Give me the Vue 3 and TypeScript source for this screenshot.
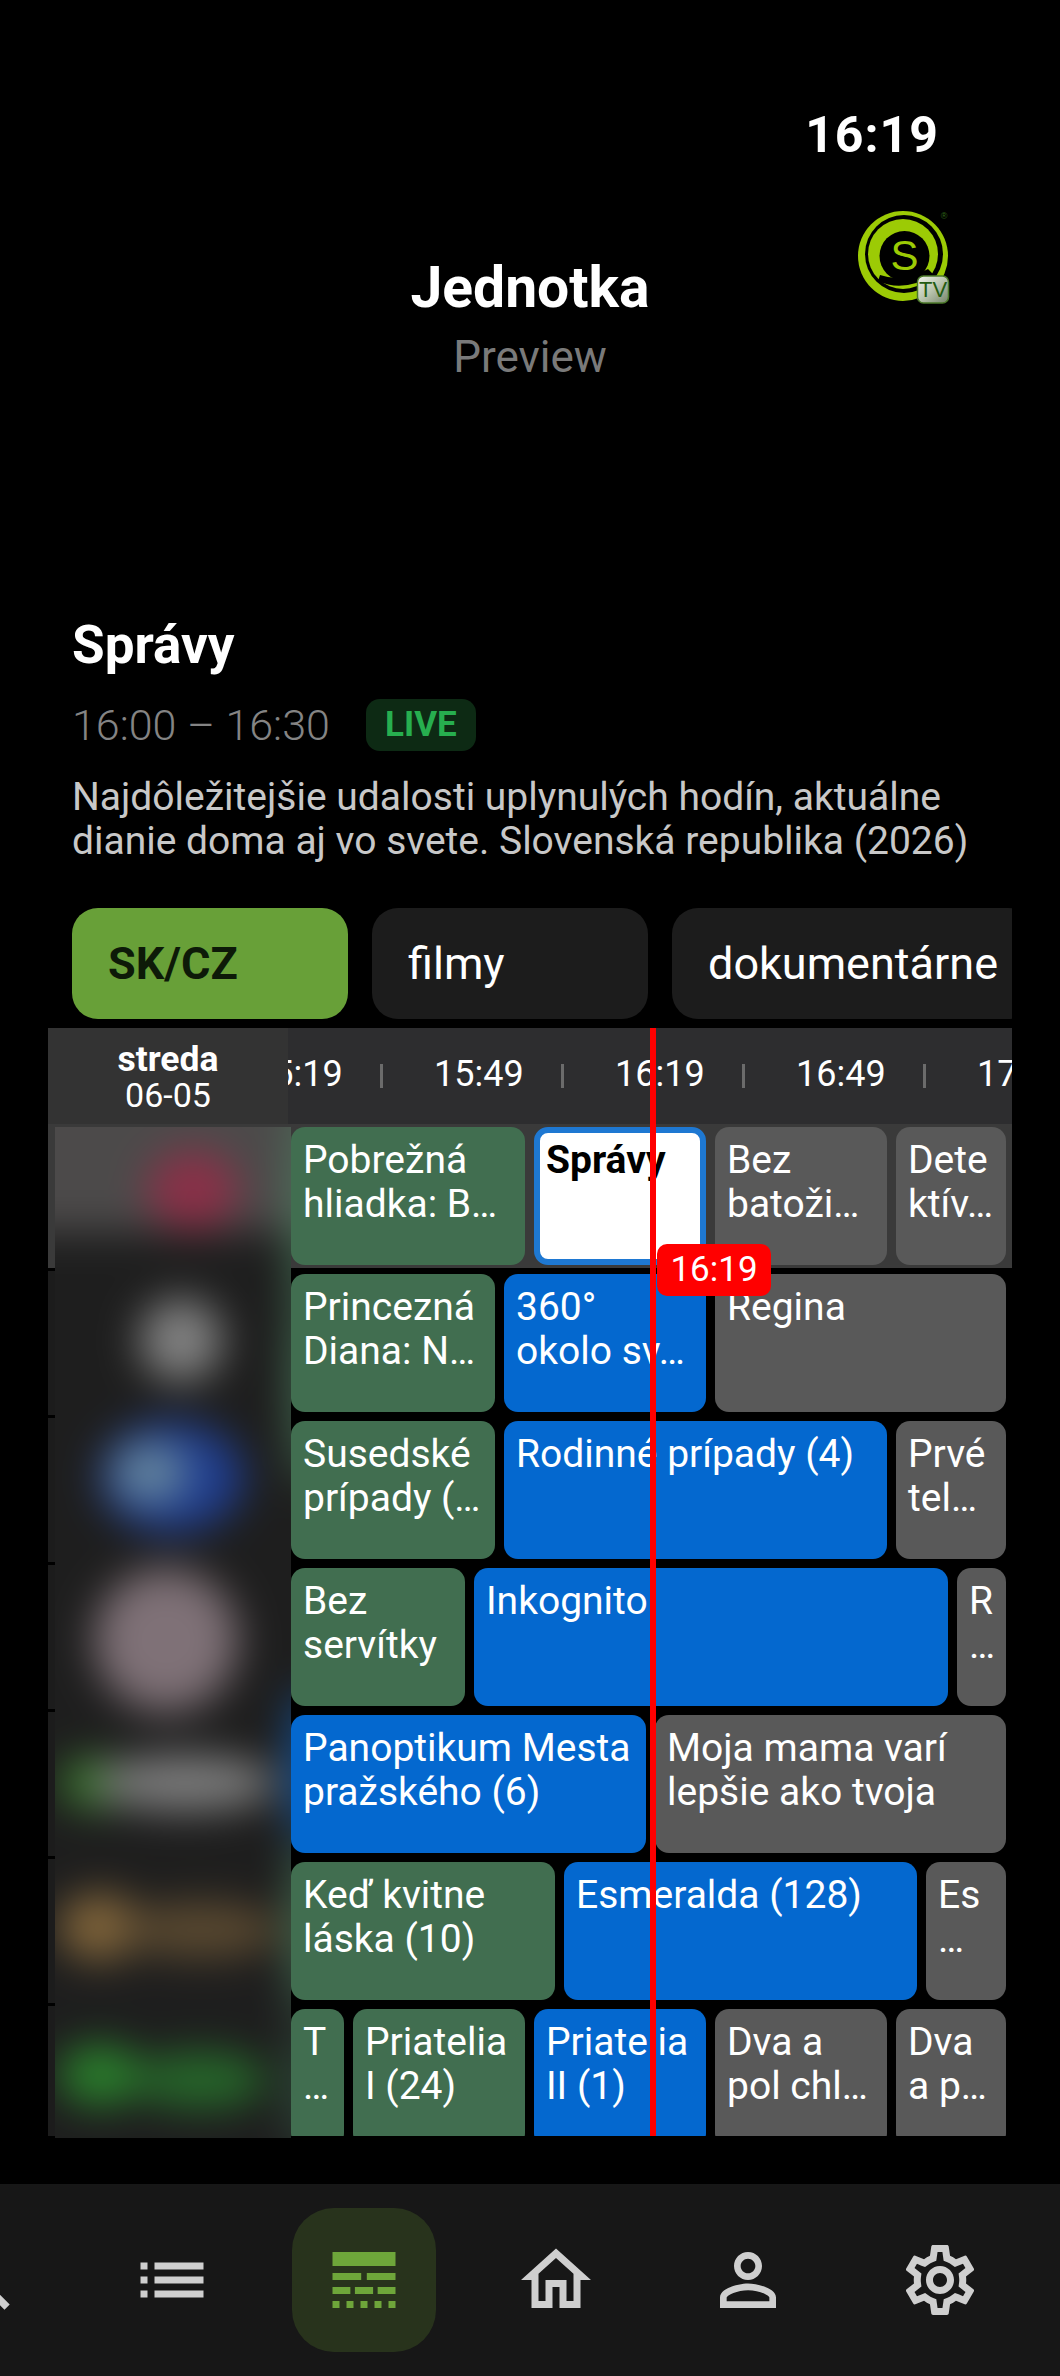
<template>
  <div class="app">
    <section class="top">
      <div class="clock">16:19</div>
      <h1 class="channel">Jednotka</h1>
      <div class="preview">Preview</div>
      <svg class="logo" viewBox="0 0 94 98" width="94" height="98">
        <circle cx="45" cy="47" r="45" fill="#9ccb05" />
        <circle cx="46" cy="45" r="39" fill="#000" />
        <circle cx="45" cy="45" r="35" fill="#9ccb05" />
        <path d="M20 72 Q45 84 76 66 L70 60 Q45 74 22 66 Z" fill="#000" />
        <circle cx="46.500" cy="47" r="25" fill="#000" />
        <text x="46.500" y="61" text-anchor="middle" class="logo-s">S</text>
        <text x="86" y="10" text-anchor="middle" class="logo-r">®</text>
        <rect x="59.500" y="67" width="31" height="27" rx="6" fill="url(#badge)" stroke="#4c7a2a" stroke-width="1.500" />
        <text x="75" y="88" text-anchor="middle" class="logo-tv">TV</text>
        <defs>
          <linearGradient id="badge" x1="0" y1="0" x2="1" y2="1">
            <stop offset="0" stop-color="#f2f5ee" />
            <stop offset="0.5" stop-color="#b9c4ae" />
            <stop offset="1" stop-color="#75846a" />
          </linearGradient>
        </defs>
      </svg>
    </section>

    <section class="info">
      <h2 class="show-title">Správy</h2>
      <div class="show-time">
        <span>16:00 – 16:30</span>
        <span class="live">LIVE</span>
      </div>
      <p class="show-desc">
        Najdôležitejšie udalosti uplynulých hodín, aktuálne<br />
        dianie doma aj vo svete. Slovenská republika (2026)
      </p>
    </section>

    <div class="chips">
      <div v-for="(c, i) in chips" :key="c" class="chip" :class="{ active: i === 0 }">{{ c }}</div>
    </div>

    <section class="guide">
      <div class="guide-head">
        <div class="date">
          <strong>streda</strong>
          <span>06-05</span>
        </div>
        <div class="track">
          <div v-for="t in times" :key="t" class="cell">
            <i class="tick"></i>
            <span>{{ t }}</span>
          </div>
        </div>
      </div>

      <div class="guide-body">
        <div v-for="(row, r) in rows" :key="r" class="row" :class="{ current: r === 0 }">
          <div class="strip"></div>
          <div class="tiles">
            <div
              v-for="(t, i) in row"
              :key="i"
              class="tile"
              :class="t.kind"
              :style="{ width: t.w + 'px' }"
            >
              <span v-for="l in t.lines" :key="l">{{ l }}</span>
            </div>
          </div>
        </div>
      </div>

      <svg class="channels" viewBox="0 0 236 1011" width="236" height="1011">
        <defs>
          <filter id="soft" x="-20%" y="-20%" width="140%" height="140%" color-interpolation-filters="sRGB">
            <feGaussianBlur stdDeviation="20" />
          </filter>
        </defs>
        <g filter="url(#soft)">
          <rect x="-80" y="-80" width="400" height="1180" fill="#1e1e1e" />
          <rect x="-80" y="-80" width="400" height="185" fill="#4c4a4a" />
          <ellipse
            v-for="(b, i) in blobs"
            :key="i"
            :cx="b[0]"
            :cy="b[1]"
            :rx="b[2]"
            :ry="b[3]"
            :fill="b[4]"
          />
        </g>
      </svg>

      <div class="now-line"></div>
      <div class="now-badge">16:19</div>
    </section>

    <nav class="nav">
      <div class="nav-item">
        <svg viewBox="0 0 24 24"><path d="M15.5 14h-.79l-.28-.27C15.41 12.59 16 11.11 16 9.5 16 5.91 13.09 3 9.5 3S3 5.91 3 9.500 5.910 16 9.500 16c1.610 0 3.090-.59 4.230-1.570l.27.28v.79l5 4.990L20.490 19l-4.990-5zm-6 0C7.010 14 5 11.990 5 9.500S7.010 5 9.500 5 14 7.010 14 9.500 11.990 14 9.500 14z" /></svg>
      </div>
      <div class="nav-item">
        <svg viewBox="0 0 24 24"><path d="M3 13h2v-2H3v2zm0 4h2v-2H3v2zm0-8h2V7H3v2zm4 4h14v-2H7v2zm0 4h14v-2H7v2zM7 7v2h14V7H7z" /></svg>
      </div>
      <div class="nav-item">
        <div class="nav-active">
          <svg viewBox="0 0 24 24" class="epg">
            <rect x="3" y="4" width="18" height="4" />
            <rect x="3" y="10" width="8.200" height="2" />
            <rect x="12.800" y="10" width="8.200" height="2" />
            <rect x="3" y="14" width="5.100" height="2" />
            <rect x="9.400" y="14" width="5.200" height="2" />
            <rect x="15.900" y="14" width="5.100" height="2" />
            <rect x="3" y="18" width="2" height="2" />
            <rect x="7" y="18" width="2" height="2" />
            <rect x="11" y="18" width="2" height="2" />
            <rect x="15" y="18" width="2" height="2" />
            <rect x="19" y="18" width="2" height="2" />
          </svg>
        </div>
      </div>
      <div class="nav-item">
        <svg viewBox="0 0 24 24"><path d="M12 5.690l5 4.500V18h-2v-6H9v6H7v-7.810l5-4.500M12 3L2 12h3v8h6v-6h2v6h6v-8h3L12 3z" /></svg>
      </div>
      <div class="nav-item">
        <svg viewBox="0 0 24 24"><path d="M12 5.900c1.160 0 2.100.94 2.100 2.100s-.94 2.100-2.100 2.100S9.900 9.160 9.900 8s.94-2.100 2.100-2.100m0 9c2.970 0 6.100 1.460 6.100 2.100v1.100H5.900V17c0-.64 3.130-2.100 6.100-2.100M12 4C9.790 4 8 5.790 8 8s1.790 4 4 4 4-1.790 4-4-1.790-4-4-4zm0 9c-2.670 0-8 1.340-8 4v3h16v-3c0-2.660-5.330-4-8-4z" /></svg>
      </div>
      <div class="nav-item">
        <svg viewBox="0 0 24 24"><path d="M19.430 12.980c.04-.32.07-.64.07-.98 0-.34-.03-.66-.07-.98l2.110-1.650c.19-.15.24-.42.12-.64l-2-3.460c-.09-.16-.26-.25-.44-.25-.06 0-.12.01-.17.03l-2.490 1c-.52-.4-1.080-.73-1.690-.98l-.38-2.650C14.460 2.180 14.250 2 14 2h-4c-.25 0-.46.18-.49.42l-.38 2.650c-.61.25-1.170.59-1.690.98l-2.490-1c-.06-.02-.12-.03-.18-.03-.17 0-.34.09-.43.25l-2 3.460c-.13.22-.07.49.12.64l2.110 1.650c-.04.32-.07.65-.07.98 0 .33.03.66.07.98l-2.110 1.650c-.19.15-.24.42-.12.64l2 3.460c.09.16.26.25.44.25.06 0 .12-.01.17-.03l2.490-1c.52.4 1.080.73 1.690.98l.38 2.650c.03.24.24.42.49.42h4c.25 0 .46-.18.49-.42l.38-2.650c.61-.25 1.170-.59 1.690-.98l2.490 1c.06.02.12.03.18.03.17 0 .34-.09.43-.25l2-3.460c.12-.22.07-.49-.12-.64l-2.110-1.650zm-1.980-1.710c.04.31.05.52.05.73 0 .21-.02.43-.05.73l-.14 1.130.89.7 1.080.84-.7 1.210-1.270-.51-1.040-.42-.9.68c-.43.32-.84.56-1.250.73l-1.060.43-.16 1.130-.2 1.350h-1.400l-.19-1.350-.16-1.130-1.060-.43c-.43-.18-.83-.41-1.230-.71l-.91-.7-1.060.43-1.270.51-.7-1.210 1.080-.84.89-.7-.14-1.130c-.03-.31-.05-.54-.05-.74s.02-.43.05-.73l.14-1.130-.89-.7-1.080-.84.7-1.210 1.270.51 1.040.42.9-.68c.43-.32.84-.56 1.250-.73l1.060-.43.16-1.130.2-1.350h1.390l.19 1.350.16 1.130 1.060.43c.43.18.83.41 1.230.71l.91.7 1.060-.43 1.270-.51.7 1.210-1.070.85-.89.7.14 1.130zM12 8c-2.210 0-4 1.790-4 4s1.790 4 4 4 4-1.790 4-4-1.790-4-4-4zm0 6c-1.100 0-2-.9-2-2s.9-2 2-2 2 .9 2 2-.9 2-2 2z" /></svg>
      </div>
    </nav>
  </div>
</template>

<script setup lang="ts">
type Kind = 'past' | 'now' | 'next' | 'selected'

interface Tile {
  w: number
  kind: Kind
  lines: string[]
}

const chips = ['SK/CZ', 'filmy', 'dokumentárne']
const times = ['15:19', '15:49', '16:19', '16:49', '17:19']

const rows: Tile[][] = [
  [
    { w: 234, kind: 'past', lines: ['Pobrežná', 'hliadka: B…'] },
    { w: 172, kind: 'selected', lines: ['Správy'] },
    { w: 172, kind: 'next', lines: ['Bez', 'batoži…'] },
    { w: 110, kind: 'next', lines: ['Dete', 'ktív…'] },
  ],
  [
    { w: 204, kind: 'past', lines: ['Princezná', 'Diana: N…'] },
    { w: 202, kind: 'now', lines: ['360°', 'okolo sv…'] },
    { w: 291, kind: 'next', lines: ['Regina'] },
  ],
  [
    { w: 204, kind: 'past', lines: ['Susedské', 'prípady (…'] },
    { w: 383, kind: 'now', lines: ['Rodinné prípady (4)'] },
    { w: 110, kind: 'next', lines: ['Prvé', 'tel…'] },
  ],
  [
    { w: 174, kind: 'past', lines: ['Bez', 'servítky'] },
    { w: 474, kind: 'now', lines: ['Inkognito'] },
    { w: 49, kind: 'next', lines: ['R', '…'] },
  ],
  [
    { w: 355, kind: 'now', lines: ['Panoptikum Mesta', 'pražského (6)'] },
    { w: 351, kind: 'next', lines: ['Moja mama varí', 'lepšie ako tvoja'] },
  ],
  [
    { w: 264, kind: 'past', lines: ['Keď kvitne', 'láska (10)'] },
    { w: 353, kind: 'now', lines: ['Esmeralda (128)'] },
    { w: 80, kind: 'next', lines: ['Es', '…'] },
  ],
  [
    { w: 53, kind: 'past', lines: ['T', '…'] },
    { w: 172, kind: 'past', lines: ['Priatelia', 'I (24)'] },
    { w: 172, kind: 'now', lines: ['Priatelia', 'II (1)'] },
    { w: 172, kind: 'next', lines: ['Dva a', 'pol chl…'] },
    { w: 110, kind: 'next', lines: ['Dva', 'a p…'] },
  ],
]

// blurred channel logos: cx, cy, rx, ry, colour
const blobs: [number, number, number, number, string][] = [
  [138, 63, 46, 40, '#8a3048'],
  [126, 213, 42, 42, '#808080'],
  [117, 350, 72, 56, '#1f3d8e'],
  [95, 346, 38, 30, '#64849c'],
  [111, 513, 72, 72, '#7f7177'],
  [40, 656, 36, 26, '#38762c'],
  [130, 656, 92, 28, '#7c7c7c'],
  [45, 800, 42, 34, '#80643a'],
  [145, 803, 82, 28, '#5a4930'],
  [45, 948, 42, 30, '#2a802c'],
  [145, 953, 68, 28, '#26682a'],
  [250, 90, 12, 130, '#4d8260'],
  [250, 250, 12, 110, '#4d8260'],
  [250, 640, 14, 80, '#1058a8'],
  [250, 800, 12, 90, '#4d8260'],
  [250, 960, 12, 70, '#345844'],
]
</script>

<style>
html,
body {
  margin: 0;
  background: #000;
}
</style>

<style scoped>
.app {
  position: relative;
  width: 1060px;
  height: 2376px;
  overflow: hidden;
  display: flex;
  flex-direction: column;
  background: #000;
  color: #fff;
  font-family: Roboto, "Noto Sans", sans-serif;
}

.top {
  position: relative;
  height: 615px;
  flex: none;
  text-align: center;
}

.clock {
  padding-top: 105px;
  padding-right: 121px;
  text-align: right;
  font-size: 50px;
  line-height: 60px;
  font-weight: 700;
  letter-spacing: 1px;
}

.channel {
  margin: 93px 0 0;
  font-size: 57px;
  line-height: 60px;
  font-weight: 700;
}

.preview {
  margin-top: 14px;
  font-size: 44px;
  line-height: 50px;
  color: #7a7a7a;
}

.logo {
  position: absolute;
  left: 858px;
  top: 209px;
}

.logo-s {
  font-family: "Liberation Sans", sans-serif;
  font-size: 42px;
  fill: #9ccb05;
}

.logo-r {
  font-family: "Liberation Sans", sans-serif;
  font-size: 9px;
  fill: #2f6a18;
}

.logo-tv {
  font-family: "Liberation Sans", sans-serif;
  font-size: 22px;
  fill: #245c12;
}

.info {
  flex: none;
  padding: 0 72px;
}

.show-title {
  margin: 0;
  font-size: 53px;
  line-height: 60px;
  font-weight: 700;
}

.show-time {
  display: flex;
  align-items: center;
  gap: 36px;
  margin-top: 24px;
  height: 52px;
  font-size: 43px;
  font-weight: 300;
  color: #848484;
}

.live {
  width: 110px;
  height: 52px;
  border-radius: 14px;
  background: #0d2a14;
  color: #27ae4f;
  font-size: 35px;
  line-height: 52px;
  font-weight: 700;
  text-align: center;
}

.show-desc {
  margin: 24px 0 0;
  font-size: 39px;
  line-height: 44px;
  color: #c8c8c8;
  white-space: nowrap;
}

.chips {
  flex: none;
  display: flex;
  gap: 24px;
  width: 940px;
  margin: 45px 0 0 72px;
  overflow: hidden;
}

.chip {
  flex: none;
  box-sizing: border-box;
  min-width: 276px;
  height: 111px;
  padding: 0 36px;
  border-radius: 26px;
  background: #1c1c1c;
  font-size: 45px;
  line-height: 111px;
}

.chip.active {
  background: #68a038;
  color: #0d1a08;
  font-weight: 700;
}

.guide {
  position: relative;
  flex: none;
  width: 964px;
  height: 1108px;
  margin: 9px 0 0 48px;
}

.guide-head {
  display: flex;
  height: 96px;
  overflow: hidden;
  background: #2d2d2f;
}

.date {
  position: relative;
  z-index: 1;
  flex: none;
  width: 240px;
  display: flex;
  flex-direction: column;
  align-items: center;
  padding-top: 13px;
  box-sizing: border-box;
  background: #333;
  font-size: 34px;
  line-height: 36px;
}

.date strong {
  font-size: 35.500px;
  font-weight: 700;
}

.track {
  flex: none;
  display: flex;
  margin-left: -89px;
}

.cell {
  position: relative;
  flex: none;
  width: 181px;
  box-sizing: border-box;
  padding-left: 54px;
  font-size: 36px;
  line-height: 92px;
}

.tick {
  position: absolute;
  left: 0;
  top: 36px;
  width: 3px;
  height: 24px;
  background: #6b6b6b;
}

.guide-body {
  display: flex;
  flex-direction: column;
  gap: 3px;
  height: 1012px;
  overflow: hidden;
}

.row {
  flex: none;
  height: 144px;
  display: flex;
}

.row.current {
  background: #3a3a3a;
}

.strip {
  flex: none;
  width: 243px;
  background: #1c1c1c;
}

.current .strip {
  background: transparent;
}

.tiles {
  display: flex;
  gap: 9px;
  padding: 3px 0;
}

.tile {
  flex: none;
  box-sizing: border-box;
  display: flex;
  flex-direction: column;
  height: 138px;
  padding: 11px 0 0 12px;
  border-radius: 14px;
  overflow: hidden;
  font-size: 39px;
  line-height: 44px;
  white-space: nowrap;
}

.tile.past {
  background: #416e50;
}

.tile.now {
  background: #0468cf;
}

.tile.next {
  background: #595959;
}

.tile.selected {
  background: #fff;
  border: 6px solid #1e78d2;
  padding: 5px 0 0 6px;
  color: #000;
  font-weight: 700;
}

.channels {
  position: absolute;
  left: 7px;
  top: 99px;
}

.now-line {
  position: absolute;
  left: 602px;
  top: 0;
  bottom: 0;
  width: 6px;
  background: #ff0000;
}

.now-badge {
  position: absolute;
  left: 609px;
  top: 216px;
  width: 114px;
  height: 52px;
  border-radius: 10px;
  background: #ff0000;
  font-size: 35px;
  line-height: 52px;
  text-align: center;
}

.nav {
  position: absolute;
  left: -116px;
  bottom: 0;
  width: 1176px;
  height: 192px;
  padding-right: 20px;
  display: flex;
  background: #171717;
}

.nav-item {
  flex: none;
  width: 192px;
  display: flex;
  align-items: center;
  justify-content: center;
}

.nav-item svg {
  width: 84px;
  height: 84px;
  fill: #cfcfcf;
}

.nav-active {
  width: 144px;
  height: 144px;
  border-radius: 42px;
  background: #28331c;
  display: flex;
  align-items: center;
  justify-content: center;
}

.nav-item svg.epg {
  fill: #6ea63a;
}
</style>
